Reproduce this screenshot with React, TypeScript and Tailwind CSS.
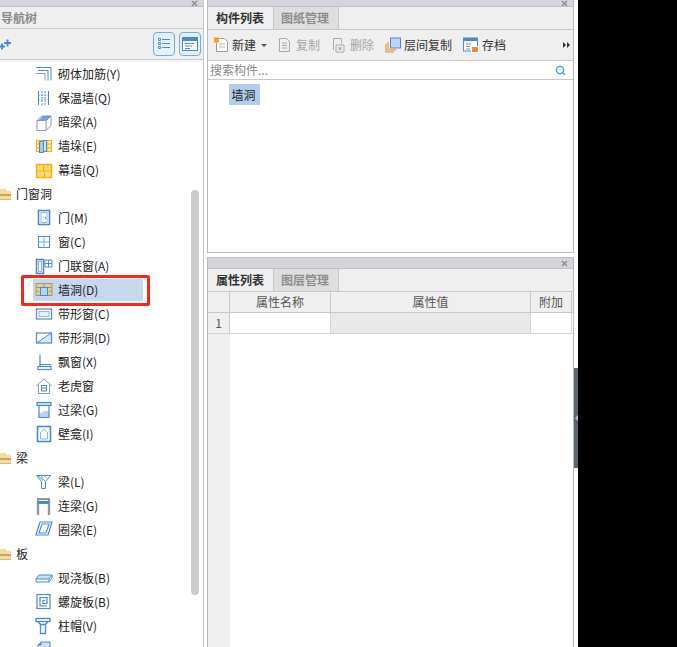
import React from 'react';
import { Search } from 'lucide-react';

const B = '#4a8ad4';
const G = '#8e99a6';

// tree icons, all drawn on a 18x18 box
const icons: Record<string, React.ReactNode> = {
  rebar: <g fill="none" stroke={B}><path d="M1 2.500h15v13M3 5.500h10v10" /><path d="M1 8.500h9v7" stroke={G} /></g>,
  insul: <g fill="none" stroke={B}><path d="M3.500 2v14M13.500 2v14" /><path d="M7 2v14M10 2v14" strokeDasharray="2 1" /><path d="M3.500 6.500h10M3.500 10.500h10" strokeDasharray="1 2" /></g>,
  hidden: <g fill="none" stroke={G}><path d="M2 7.500h9v10H2zM2 7.500l5-4.500h9l-5 4.500M11 17.500l5-5V3" /><path d="M8 3h8l-4 4H4z" fill={B} stroke="none" opacity=".8" /></g>,
  stub: <g><rect x="1.500" y="3.500" width="15" height="11" fill="#ffe6a8" stroke="#f5b400" /><path d="M12 3.500v11M12 7h4M12 11h4M1.500 7h3M1.500 11h3" stroke="#f5b400" /><rect x="4.500" y="4.500" width="4" height="11" fill="#a8c8ee" stroke={B} /><rect x="8.500" y="3.500" width="3" height="11" fill="#d5e5f7" stroke={B} /></g>,
  curtain: <g><rect x="1.500" y="3.500" width="15" height="13" fill="#ffd97a" stroke="#f5b400" strokeWidth="1.400" /><path d="M2 10h14M8.500 4v6M9.500 10v6" stroke="#f5b400" strokeWidth="1.200" /></g>,
  door: <g fill="none" stroke={B}><rect x="3.500" y="1.500" width="11" height="14" strokeWidth="1.600" /><rect x="6" y="3.500" width="6" height="10" stroke="#8fb7e6" /><path d="M10.500 8v1.500" /></g>,
  win: <g fill="none" stroke={B}><rect x="3.500" y="3.500" width="11" height="11" /><path d="M9 3.500v11M3.500 9h11" stroke="#7fabe0" /></g>,
  doorwin: <g fill="none" stroke={B}><rect x="1.500" y="2.500" width="7" height="14" strokeWidth="1.600" /><rect x="3.500" y="4.500" width="3" height="10" stroke="#8fb7e6" /><path d="M10 3h7v7h-7zM13.500 3v7M10 6.500h7" /></g>,
  hole: <g><rect x="1" y="2.500" width="16" height="12" fill="#d9cf9b" stroke="#a59b62" /><path d="M1 6.500h16M1 10.500h3M14 10.500h3M9 2.500v4" stroke="#a59b62" /><rect x="5.500" y="6.500" width="7" height="8" fill="#b9d4f2" stroke={B} /></g>,
  stripwin: <g fill="none" stroke={B}><rect x="1.500" y="4" width="15" height="10" strokeWidth="1.200" /><rect x="4" y="6.500" width="10" height="5" stroke="#8fb7e6" fill="#e5effa" /></g>,
  striphole: <g stroke={B} fill="none"><path d="M2 14L16 5v9z" fill="#dce9f8" stroke="none" /><rect x="1.500" y="4" width="15" height="10" strokeWidth="1.200" /><path d="M1.500 14L16.500 4" /></g>,
  bay: <g fill="none" stroke={B} strokeWidth="1.200"><path d="M5 1.500v12M5 11.500h11" /><rect x="3" y="13.500" width="13" height="3" /></g>,
  dormer: <g fill="none" stroke={G}><path d="M1 9l8-7 8 7M3.500 7.500v9h11v-9" /><rect x="6.500" y="8.500" width="5" height="5.500" stroke={B} /><path d="M6.500 11h5" stroke={B} /></g>,
  lintel: <g fill="none" stroke={B}><rect x="2" y="1.500" width="14" height="3" strokeWidth="1.200" fill="#cfe0f5" /><path d="M4 13l5-3h5v6H4z" fill="#b9d4f2" stroke="none" /><path d="M4 4.500v12h10v-12" strokeWidth="1.200" /></g>,
  niche: <g fill="none" stroke={B}><rect x="2.500" y="1.500" width="13" height="15" strokeWidth="1.600" /><path d="M5.500 14V7l3.500-3 3.500 3v7z" stroke="#8fb7e6" /></g>,
  beam: <g fill="none" stroke={B}><path d="M1.500 2.500h14l-5 6v7h-4v-7zM3 2.500l5 5" /><path d="M6 2.500l4 6M9 2.500l3 3" stroke={G} /></g>,
  coupling: <g fill="none"><path d="M3 3v15M14 3v15" stroke={G} strokeWidth="2.400" /><path d="M2 2h13" stroke={G} strokeWidth="2" /><path d="M3 5.500h11" stroke={B} strokeWidth="3" /></g>,
  ring: <g fill="none" stroke={B} strokeWidth="1.200"><path d="M5 1h12l-4 13H1zM7 3h7l-3 9H4z" /></g>,
  slab: <g stroke={B} fill="none"><path d="M1 10l3-4h13l-3 4z" fill="#cfe0f5" /><path d="M1 10v3h13l3-4V6M14 10v3" /></g>,
  spiral: <g fill="none" stroke={B} strokeWidth="1.200"><rect x="2" y="1.500" width="13" height="14" /><path d="M12 13H5V4.500h7v6H8V7.500h2" /></g>,
  cap: <g fill="none" stroke={B} strokeWidth="1.300"><rect x="1" y="1.500" width="14" height="3" /><path d="M3 4.500l2.500 3h5l2.500-3M5.500 7.500v9h5v-9" /></g>,
  next: <g fill="none" stroke={B}><path d="M3 6l3-3h9v12H3z" fill="#cfe0f5" /><path d="M6 3v3H3" fill={G} /></g>,
};

const Folder = () => (
  <svg width="11" height="13" viewBox="0 0 11 13" className="shrink-0">
    <path d="M0 1h6l1 2h4v9H0z" fill="#f3dca2" />
    <rect x="0" y="6" width="11" height="2" fill="#c9a55a" />
    <rect x="0" y="11" width="11" height="1" fill="#d8b86e" />
  </svg>
);

type Row = { label: string; icon?: string };

const rows: Row[] = [
  { label: '砌体加筋(Y)', icon: 'rebar' },
  { label: '保温墙(Q)', icon: 'insul' },
  { label: '暗梁(A)', icon: 'hidden' },
  { label: '墙垛(E)', icon: 'stub' },
  { label: '幕墙(Q)', icon: 'curtain' },
  { label: '门窗洞' },
  { label: '门(M)', icon: 'door' },
  { label: '窗(C)', icon: 'win' },
  { label: '门联窗(A)', icon: 'doorwin' },
  { label: '墙洞(D)', icon: 'hole' },
  { label: '带形窗(C)', icon: 'stripwin' },
  { label: '带形洞(D)', icon: 'striphole' },
  { label: '飘窗(X)', icon: 'bay' },
  { label: '老虎窗', icon: 'dormer' },
  { label: '过梁(G)', icon: 'lintel' },
  { label: '壁龛(I)', icon: 'niche' },
  { label: '梁' },
  { label: '梁(L)', icon: 'beam' },
  { label: '连梁(G)', icon: 'coupling' },
  { label: '圈梁(E)', icon: 'ring' },
  { label: '板' },
  { label: '现浇板(B)', icon: 'slab' },
  { label: '螺旋板(B)', icon: 'spiral' },
  { label: '柱帽(V)', icon: 'cap' },
];

const TreeRow = ({ row }: { row: Row }) => {
  if (!row.icon) {
    return (
      <div className="h-6 shrink-0 flex items-center gap-[5px] text-[#222]">
        <Folder />
        <span>{row.label}</span>
      </div>
    );
  }
  const selected = row.label === '墙洞(D)';
  return (
    <div className="h-6 shrink-0 pl-[33px] flex items-center">
      <div className={`flex items-center h-[22px] w-[110px] ${selected ? 'bg-[#c6d7ee]' : ''}`}>
        <svg width="18" height="18" viewBox="0 0 18 18" className="shrink-0 ml-[2px]">{icons[row.icon]}</svg>
        <span className="ml-[5px] text-[#222] whitespace-nowrap">{row.label}</span>
      </div>
    </div>
  );
};

const CloseX = () => (
  <svg width="7" height="7" viewBox="0 0 7 7" className="shrink-0" stroke="#8a8d92" strokeWidth="1.400">
    <path d="M1 1l5 5M6 1l-5 5" />
  </svg>
);

const Tabs = ({ first, second }: { first: string; second: string }) => (
  <div className="h-[23px] shrink-0 bg-[#efefef] border-b border-[#c6c8cb] flex">
    <div className="w-[65px] pr-px flex items-center justify-center font-bold text-[#333]">{first}</div>
    <div className="w-[66px] pr-[2px] flex items-center justify-center font-bold text-[#8d8d8d] bg-[#dedede] border-x border-[#c6c8cb]">{second}</div>
  </div>
);

const ToolIcon = ({ children }: { children: React.ReactNode }) => (
  <svg width="16" height="16" viewBox="0 0 16 16" className="shrink-0">{children}</svg>
);

const tools: { label: string; muted?: boolean; gap: string; icon: React.ReactNode }[] = [
  {
    label: '复制', muted: true, gap: 'ml-[10px]',
    icon: <g fill="none" stroke="#a9a9a9"><path d="M2.500 1.500h7l3 3v10h-10z" /><path d="M5 6h5M5 8.500h5M5 11h5" /></g>,
  },
  {
    label: '删除', muted: true, gap: 'ml-[11px]',
    icon: <g fill="none" stroke="#a9a9a9"><path d="M2.500 13V1.500h8v5" /><path d="M5 15h8V8H5z" /><path d="M7.500 10l3 3M10.500 10l-3 3" stroke="#888" /></g>,
  },
  {
    label: '层间复制', gap: 'ml-[11px]',
    icon: <g><path d="M1 7v8h8" fill="none" stroke="#e8832a" /><path d="M3 5v8h8" fill="none" stroke="#e8832a" /><rect x="5.500" y="1" width="10" height="10" fill="#bcd7f5" stroke={B} /></g>,
  },
  {
    label: '存档', gap: 'ml-[11px]',
    icon: <g><rect x="0.500" y="1" width="14" height="13" fill="#fff" stroke={B} /><rect x="0.500" y="1" width="14" height="3" fill={B} /><path d="M3 7h5M3 9.500h4M3 12h4" stroke="#888" /><rect x="8.500" y="9.500" width="7" height="6" fill="#f08a32" stroke="#fff" /></g>,
  },
];

export default function App() {
  return (
    <div className="relative w-[677px] h-[647px] overflow-hidden bg-white flex text-[12px] leading-none font-['Noto_Sans_CJK_SC','Liberation_Sans',sans-serif]">
      {/* nav tree */}
      <div className="relative w-[204px] shrink-0 h-full flex flex-col border-r border-[#c4c6c9] overflow-hidden">
        <div className="h-[7px] shrink-0 bg-[#d3d5da] border-b border-[#bfc1c5] flex items-center justify-end pr-[5px] overflow-hidden">
          <CloseX />
        </div>
        <div className="h-[22px] shrink-0 bg-[#efefef] border-b border-[#c6c8cb] flex items-center pl-px text-[#8a8a8a] font-bold">导航树</div>
        <div className="h-[31px] shrink-0 bg-[#efefef] border-b border-[#c6c8cb] flex items-center justify-between pr-[2px]">
          <svg width="12" height="11" viewBox="0 0 12 11">
            <path d="M0 7.500h5M2 4.500v6" stroke={B} strokeWidth="2" />
            <path d="M4 4h7M7.500 0.500v7" stroke={B} strokeWidth="2" />
          </svg>
          <div className="flex gap-[4px]">
            <div className="w-[22px] h-[24px] rounded-[4px] border border-[#66aef0] bg-[#e8f0f8] flex items-center justify-center">
              <svg width="14" height="14" viewBox="0 0 14 14" fill="none" stroke={B}>
                <path d="M1.500 1.500h2v2h-2zM1.500 5.500h2v2h-2zM1.500 9.500h2v2h-2zM5 2.500h8M5 6.500h8M5 10.500h8" />
              </svg>
            </div>
            <div className="w-[22px] h-[24px] rounded-[4px] border border-[#66aef0] bg-[#e8f0f8] flex items-center justify-center">
              <svg width="16" height="14" viewBox="0 0 16 14">
                <rect x="0.500" y="0.500" width="15" height="13" fill="#fff" stroke={B} />
                <rect x="0.500" y="0.500" width="15" height="3.500" fill={B} />
                <path d="M3 6.500h9M3 9h7M3 11.500h5" stroke={B} />
              </svg>
            </div>
          </div>
        </div>
        <div className="flex-1 min-h-0 flex flex-col border-t-2 border-[#f4f4f4] overflow-hidden">
          {rows.map((r) => <TreeRow key={r.label} row={r} />)}
          <div className="shrink-0 pl-[35px] pt-[1px]">
            <svg width="18" height="18" viewBox="0 0 18 18">{icons.next}</svg>
          </div>
        </div>
        <div className="absolute left-[191px] top-[190px] w-2 h-[405px] rounded bg-[#cccccc]" />
      </div>

      {/* right panels */}
      <div className="ml-[3px] w-[367px] shrink-0 h-full flex flex-col">
        <div className="h-[253px] shrink-0 flex flex-col border-x border-b border-[#b9bbbe]">
          <div className="h-[7px] shrink-0 bg-[#d3d5da] border-b border-[#bfc1c5] flex items-center justify-end pr-[5px] overflow-hidden">
            <CloseX />
          </div>
          <Tabs first="构件列表" second="图纸管理" />
          <div className="h-[31px] shrink-0 bg-[#efefef] border-b border-[#c6c8cb] flex items-center pl-[5px] text-[#333]">
            <ToolIcon>
              <path d="M3.500 1.500h8l3 3v10h-11z" fill="#fff" stroke="#9a9a9a" />
              <path d="M6 7h6M6 10h6" stroke="#b5b5b5" />
              <rect x="1" y="0.500" width="5" height="5" fill="#f59b2f" />
            </ToolIcon>
            <span className="ml-[3px]">新建</span>
            <span className="ml-[5px] w-0 h-0 border-x-[3px] border-x-transparent border-t-[3px] border-t-[#555]" />
            {tools.map((t) => (
              <div key={t.label} className={`flex items-center ${t.gap}`}>
                <ToolIcon>{t.icon}</ToolIcon>
                <span className={`ml-[3px] ${t.muted ? 'text-[#a5a5a5]' : ''}`}>{t.label}</span>
              </div>
            ))}
            <div className="ml-auto mr-[3px] flex gap-px">
              <span className="w-0 h-0 border-y-[3px] border-y-transparent border-l-[3px] border-l-[#333]" />
              <span className="w-0 h-0 border-y-[3px] border-y-transparent border-l-[3px] border-l-[#333]" />
            </div>
          </div>
          <div className="h-[19px] shrink-0 bg-white border-b border-[#c6c8cb] flex items-center justify-between pl-[2px] pr-[7px] text-[#888]">
            <span>搜索构件...</span>
            <Search size={11} color="#3f9bd8" strokeWidth={3} />
          </div>
          <div className="flex-1 min-h-0 pl-[21px] pt-[4px] bg-white">
            <div className="w-[31px] h-[21px] pr-[2px] bg-[#b3cdee] flex items-center justify-center text-[#222]">墙洞</div>
          </div>
        </div>

        <div className="mt-[4px] flex-1 min-h-0 flex flex-col border-x border-t border-[#b9bbbe]">
          <div className="h-[11px] shrink-0 bg-[#d3d5da] border-b border-[#bfc1c5] flex items-center justify-end pr-[5px]">
            <CloseX />
          </div>
          <Tabs first="属性列表" second="图层管理" />
          <div className="h-[21px] shrink-0 flex bg-[#efefef] border-b border-[#c6c8cb] text-[#555]">
            <div className="w-[22px] border-r border-[#c6c8cb]" />
            <div className="w-[101px] border-r border-[#c6c8cb] flex items-center justify-center">属性名称</div>
            <div className="w-[200px] border-r border-[#c6c8cb] flex items-center justify-center">属性值</div>
            <div className="w-[41px] border-r border-[#c6c8cb] flex items-center justify-center">附加</div>
          </div>
          <div className="h-[21px] shrink-0 flex border-b border-[#d6d6d6]">
            <div className="w-[22px] bg-[#efefef] border-r border-[#c6c8cb] flex items-center justify-center text-[#555]">1</div>
            <div className="w-[101px] bg-white border-r border-[#d6d6d6]" />
            <div className="w-[200px] bg-[#e9e9e9] border-r border-[#d6d6d6]" />
            <div className="w-[41px] bg-white border-r border-[#d6d6d6]" />
          </div>
          <div className="flex-1 min-h-0 flex">
            <div className="w-[22px] bg-[#efefef]" />
          </div>
        </div>
      </div>

      {/* splitter handle and black edge */}
      <div className="w-[4px] shrink-0 h-full pt-[368px]">
        <div className="h-[100px] bg-[#5c6670] flex items-center justify-center">
          <span className="w-0 h-0 border-y-[3px] border-y-transparent border-r-[3px] border-r-[#b9c0c7]" />
        </div>
      </div>
      <div className="flex-1 bg-black" />

      {/* red annotation */}
      <div className="absolute left-[21px] top-[275px] w-[129px] h-[31px] border-[3px] border-[#f02a1e] rounded-[2px] pointer-events-none" />
    </div>
  );
}
